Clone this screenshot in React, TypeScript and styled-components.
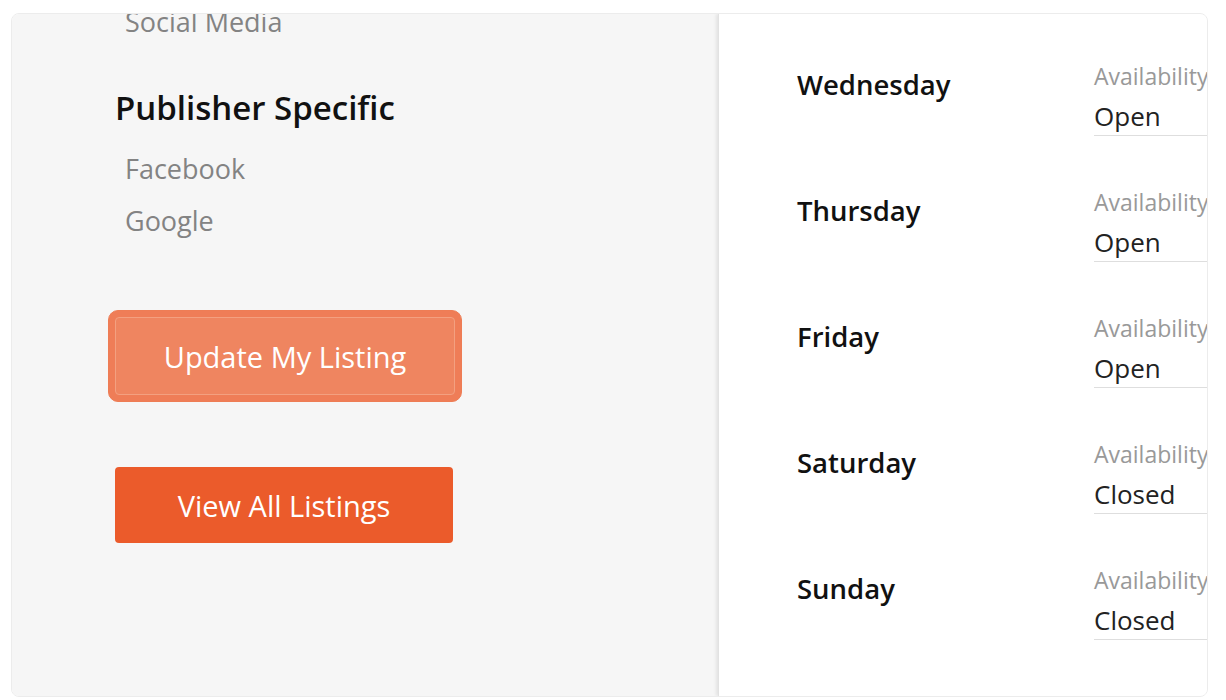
import styled, { createGlobalStyle } from 'styled-components'

const GlobalStyle = createGlobalStyle`
  html, body {
    margin: 0;
    padding: 0;
    background: #ffffff;
    font-family: "Open Sans", "Noto Sans", sans-serif;
  }
`

const PUBLISHERS = ['Facebook', 'Google']

const DAYS = [
  { name: 'Wednesday', status: 'Open' },
  { name: 'Thursday', status: 'Open' },
  { name: 'Friday', status: 'Open' },
  { name: 'Saturday', status: 'Closed' },
  { name: 'Sunday', status: 'Closed' }
]

export default function App() {
  return (
    <>
      <GlobalStyle />
      <Page>
        <Card>
          <SidePanel>
            <SideContent>
              <LinkItem>Social Media</LinkItem>

              <SectionTitle>Publisher Specific</SectionTitle>
              <LinkList>
                {PUBLISHERS.map(p => (
                  <LinkItem key={p}>{p}</LinkItem>
                ))}
              </LinkList>

              <Actions>
                <FocusRing>
                  <ActionButton $soft>Update My Listing</ActionButton>
                </FocusRing>
                <ActionButton>View All Listings</ActionButton>
              </Actions>
            </SideContent>
          </SidePanel>

          <HoursPanel>
            {DAYS.map(day => (
              <DayRow key={day.name}>
                <DayName>{day.name}</DayName>
                <Field>
                  <FieldLabel>Availability</FieldLabel>
                  <FieldValue>{day.status}</FieldValue>
                </Field>
              </DayRow>
            ))}
          </HoursPanel>
        </Card>
      </Page>
    </>
  )
}

const Page = styled.div`
  width: 1226px;
  height: 700px;
  padding: 13px 18px 3px 11px;
  box-sizing: border-box;
  overflow: hidden;
`

const Card = styled.div`
  display: flex;
  height: 684px;
  border: 1px solid #ececec;
  border-radius: 8px;
  overflow: hidden;
  box-sizing: border-box;
`

const SidePanel = styled.div`
  width: 706px;
  flex-shrink: 0;
  background-color: #f6f6f6;
  overflow: hidden;
`

/* the list is scrolled a little: the first entry sits under the card's top edge */
const SideContent = styled.div`
  display: flex;
  flex-direction: column;
  padding-left: 103px;
  margin-top: -18px;
`

const SectionTitle = styled.h3`
  margin: 36px 0 11px;
  font-size: 33px;
  line-height: 48px;
  font-weight: 600;
  color: #111111;
`

const LinkList = styled.div`
  display: flex;
  flex-direction: column;
`

const LinkItem = styled.div`
  padding-left: 10px;
  font-size: 27px;
  line-height: 52px;
  color: #838383;
`

const Actions = styled.div`
  display: flex;
  flex-direction: column;
  align-items: flex-start;
  margin-top: 63px;
  gap: 65px;
`

const FocusRing = styled.div`
  margin-left: -7px;
  padding: 6px;
  border: 1px solid #ee7d55;
  background-color: #ef7d57;
  border-radius: 10px;
`

const ActionButton = styled.button<{ $soft?: boolean }>`
  width: ${p => (p.$soft ? '340px' : '338px')};
  height: ${p => (p.$soft ? '78px' : '76px')};
  border: ${p => (p.$soft ? '1px solid #f3a080' : 'none')};
  border-radius: 4px;
  background-color: ${p => (p.$soft ? '#ef8560' : '#eb5b2b')};
  color: #ffffff;
  font-family: "Open Sans", "Noto Sans", sans-serif;
  font-size: 29px;
  cursor: pointer;
  padding: 0;
`

const HoursPanel = styled.div`
  flex: 1;
  display: flex;
  flex-direction: column;
  gap: 53px;
  padding: 49px 0 0 78px;
  background-color: #ffffff;
  border-left: 1px solid #e2e2e2;
  box-shadow: -2px 0 3px rgba(0, 0, 0, 0.08);
  overflow: hidden;
  position: relative;
`

const DayRow = styled.div`
  display: flex;
  align-items: flex-start;
`

const DayName = styled.div`
  width: 297px;
  flex-shrink: 0;
  margin-top: 6px;
  font-size: 27.5px;
  line-height: 32px;
  font-weight: 600;
  color: #111111;
`

const Field = styled.div`
  width: 220px;
  flex-shrink: 0;
  padding-bottom: 3px;
  border-bottom: 1px solid #dedede;
`

const FieldLabel = styled.div`
  font-size: 23px;
  line-height: 27px;
  color: #999999;
`

const FieldValue = styled.div`
  margin-top: 10px;
  font-size: 26px;
  line-height: 32px;
  color: #222222;
`
